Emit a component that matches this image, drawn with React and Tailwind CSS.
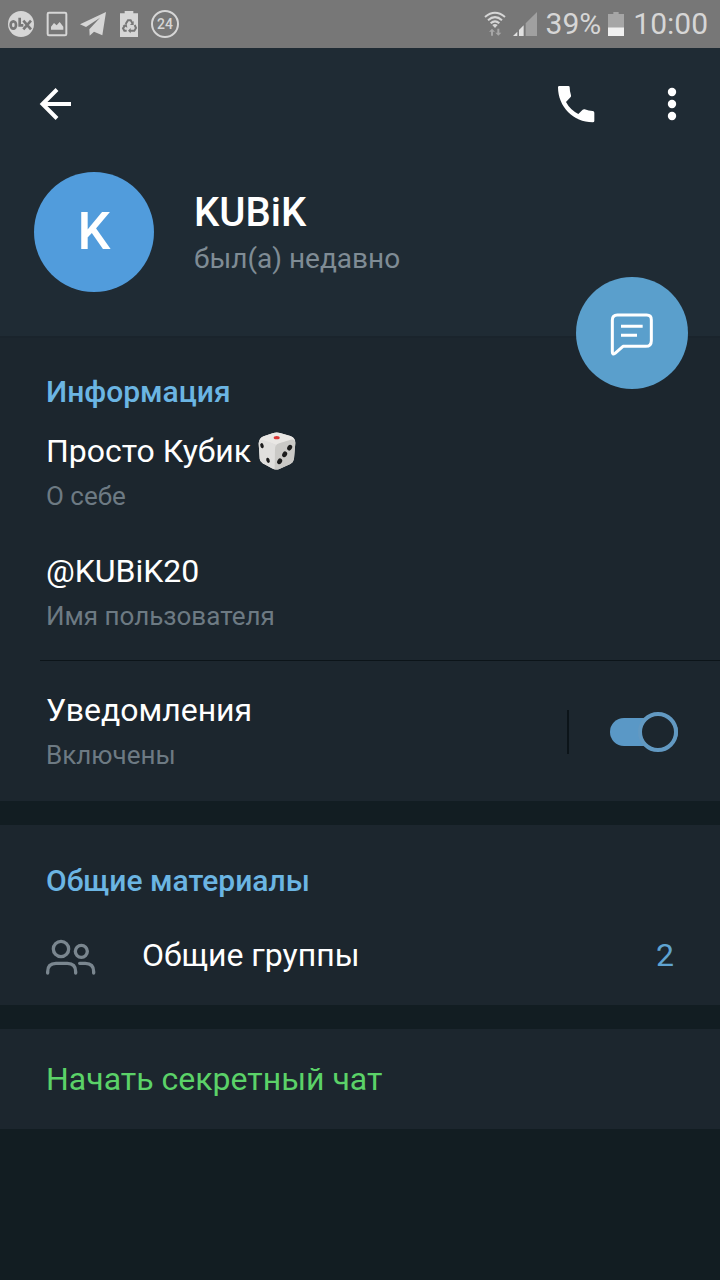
import { useState } from "react";

function StatusBar() {
  return (
    <div className="flex h-12 items-center justify-between bg-[#777777] pl-2 pr-3 text-[#d6d6d6]">
      <div className="flex items-center gap-3">
        <svg className="size-[26px]" viewBox="0 0 78 78" aria-hidden="true">
          <circle cx="39" cy="39" r="39" fill="#d6d6d6" />
          <g fill="none" stroke="#777777" strokeWidth="8">
            <ellipse cx="16" cy="42" rx="8" ry="11" />
            <path d="M35 20v23h11M46 29l23 26M69 29L46 55" />
          </g>
        </svg>
        <svg className="h-[26px] w-[22px]" viewBox="0 0 66 78" aria-hidden="true">
          <rect x="5" y="5" width="56" height="68" rx="4" fill="none" stroke="#d6d6d6" strokeWidth="6" />
          <path d="M15 56V47l9-11 8 7 9-10 11 14v9z" fill="#d6d6d6" />
        </svg>
        <svg className="size-[26px]" viewBox="0 0 78 78" aria-hidden="true">
          <path d="M0 40L78 3 67 73 42 62 29 74 28 55 60 20 18 48z" fill="#d6d6d6" />
        </svg>
        <div className="flex items-center gap-[13px] pl-[2px]">
          <svg className="h-[26px] w-[18px]" viewBox="0 0 54 78" aria-hidden="true">
            <path d="M0 7H14V0H40V7H54V78H0z" fill="#d6d6d6" />
            <g fill="none" stroke="#777777" strokeWidth="6">
              <path d="M17 39l7-11h8l5 8M44 42l4 9-5 8H30M20 59h-7l-4-7 6-9" />
            </g>
            <path d="M41 30v12H30zM32 51v16l-8-8zM8 43l12-4 2 11z" fill="#777777" />
          </svg>
          <span className="flex size-7 items-center justify-center rounded-full border-2 border-[#d6d6d6] text-[14px] font-medium leading-none">
            24
          </span>
        </div>
      </div>
      <div className="flex items-center gap-[7px]">
        <svg className="h-[26px] w-[22px]" viewBox="0 0 66 78" aria-hidden="true">
          <g fill="none" stroke="#d6d6d6" strokeWidth="6">
            <path d="M3 18Q33-7 63 18M12 28Q33 9 54 28M20 37Q33 25 46 37" />
          </g>
          <path d="M25 42q8-6 16 0l-8 9z" fill="#d6d6d6" />
          <path d="M15 62l9-9 9 9h-6v12h-6V62zM34 65h6V53h6v12h6l-9 9z" fill="#a6a6a6" />
        </svg>
        <svg className="size-6" viewBox="0 0 72 72" aria-hidden="true">
          <path d="M0 72l13-13v13zM18 72V54L32 40v32z" fill="#e0e0e0" />
          <path d="M38 72V34L72 0v72z" fill="#a0a0a0" />
        </svg>
        <span className="pl-[2px] text-[30px] leading-9">39%</span>
        <svg className="h-6 w-4" viewBox="0 0 48 72" aria-hidden="true">
          <path d="M0 6h16V0h16v6h16v40H0z" fill="#a6a6a6" />
          <path d="M0 46h48v26H0z" fill="#f0f0f0" />
        </svg>
        <time className="pl-[2px] text-[30px] leading-9">10:00</time>
      </div>
    </div>
  );
}

function Header() {
  return (
    <header className="relative border-b-2 border-[#1a242c] bg-[#1f2b34] pb-11">
      <div className="flex h-28 items-center justify-between pl-8 pr-6">
        <button type="button" aria-label="Назад" className="size-12">
          <svg className="size-12" viewBox="0 0 48 48" fill="none" stroke="#ffffff" strokeWidth="4">
            <path d="M25 9.500L10.500 24 25 38.500M11 24h28" />
          </svg>
        </button>
        <div className="flex gap-12">
          <button type="button" aria-label="Позвонить" className="size-12">
            <svg className="size-12" viewBox="35 30 144 144" fill="#ffffff">
              <path d="M57 48H84Q88 48 88 52Q88 64 92 76Q93 79 91 81L77 96Q89 119 114 132L127 119Q130 117 133 118Q145 123 157 123Q162 123 162 128V153Q162 157 157 157C99 157 53 110 53 52Q53 48 57 48Z" />
            </svg>
          </button>
          <button type="button" aria-label="Ещё" className="size-12">
            <svg className="size-12" viewBox="0 0 48 48" fill="#ffffff">
              <circle cx="24" cy="12" r="4.200" />
              <circle cx="24" cy="24" r="4.200" />
              <circle cx="24" cy="36" r="4.200" />
            </svg>
          </button>
        </div>
      </div>
      <div className="flex gap-10 px-[34px] pt-3">
        <div className="flex size-[120px] shrink-0 items-center justify-center rounded-full bg-[#519cdc] text-[52px] font-medium leading-none text-white">
          K
        </div>
        <div className="pt-[17px]">
          <h1 className="text-[40px] font-medium leading-12 text-white">KUBiK</h1>
          <p className="mt-[2px] text-[28px] leading-10 text-[#7f8c95]">был(а) недавно</p>
        </div>
      </div>
      <button
        type="button"
        aria-label="Написать сообщение"
        className="absolute -bottom-[53px] right-8 flex size-28 items-center justify-center rounded-full bg-[#5a9fcc]"
      >
        <svg className="size-12" viewBox="0 0 144 144" fill="none" stroke="#ffffff" strokeWidth="9">
          <path
            d="M28 18H116Q130 18 130 32V95Q130 112 113 112H45L21 133Q13 139 13 129V33Q13 18 28 18Z"
            strokeLinejoin="round"
          />
          <path d="M39 52H104M39 79H87" />
        </svg>
      </button>
    </header>
  );
}

function Dice() {
  return (
    <svg className="size-[38px]" viewBox="0 0 114 114" role="img" aria-label="Игральная кость">
      <path d="M2 34Q3 18 17 13L46 3Q56 0 66 3L97 12Q112 17 112 32L108 80Q107 90 97 96L64 111Q54 115 44 110L14 94Q6 89 5 80Z" fill="#dcdbd9" />
      <path d="M4 28Q7 16 17 13L46 3Q56 0 66 3L97 12Q107 15 110 24Q90 26 54 38Q26 26 4 28Z" fill="#e9e7e4" />
      <path d="M2 34Q3 22 14 24L40 32Q52 36 52 50L50 112Q46 111 42 109L14 94Q6 89 5 80Z" fill="#e0dfdd" />
      <path d="M51 52Q51 38 64 34L98 23Q112 20 112 34L108 80Q107 90 97 96L64 111Q57 114 50 112Z" fill="#cac9c6" />
      <ellipse cx="56" cy="17" rx="9" ry="5" fill="#d93636" />
      <g fill="#1c1c1c">
        <ellipse cx="12" cy="41" rx="5" ry="8" transform="rotate(-18 12 41)" />
        <ellipse cx="30" cy="85" rx="5" ry="8" transform="rotate(-18 30 85)" />
        <ellipse cx="95" cy="47" rx="7" ry="9" transform="rotate(30 95 47)" />
        <ellipse cx="80" cy="67" rx="7" ry="9" transform="rotate(30 80 67)" />
        <ellipse cx="65" cy="88" rx="7" ry="9" transform="rotate(30 65 88)" />
      </g>
    </svg>
  );
}

function InfoRow({ children, caption }) {
  return (
    <div>
      <div className="flex h-10 items-center gap-[7px] text-[32px] leading-10 text-white">{children}</div>
      <p className="mt-[7px] text-[26px] leading-9 text-[#6d7a83]">{caption}</p>
    </div>
  );
}

function SectionTitle({ children }) {
  return <h2 className="text-[30px] font-medium leading-9 text-[#6bb5e3]">{children}</h2>;
}

function NotificationSwitch() {
  const [on, setOn] = useState(true);
  return (
    <label htmlFor="notifications" className="flex cursor-pointer items-center justify-between pb-7 pl-[46px] pr-[42px] pt-[29px]">
      <InfoRow caption={on ? "Включены" : "Выключены"}>Уведомления</InfoRow>
      <span className="flex items-center gap-[41px]">
        <span className="h-11 w-[2px] bg-[#0c1419]" />
        <input
          id="notifications"
          type="checkbox"
          role="switch"
          checked={on}
          onChange={(e) => setOn(e.target.checked)}
          className="peer sr-only"
        />
        <span className="flex h-7 w-[68px] items-center rounded-full bg-[#5a6770] peer-checked:justify-end peer-checked:bg-[#5a98c6]">
          <span className="size-10 rounded-full border-4 border-[#6299c2] bg-[#1c262e]" />
        </span>
      </span>
    </label>
  );
}

function GroupsIcon() {
  return (
    <svg
      className="h-10 w-[50px]"
      viewBox="0 0 150 120"
      fill="none"
      stroke="#7a868f"
      strokeWidth="10"
      strokeLinecap="round"
      aria-hidden="true"
    >
      <circle cx="45" cy="42" r="23" />
      <circle cx="106" cy="49" r="18" />
      <path d="M5 114V110Q5 85 30 85H64Q89 85 89 110V114" />
      <path d="M101 85H118Q143 85 143 110V114" />
    </svg>
  );
}

export default function App() {
  return (
    <div className="flex min-h-screen flex-col bg-[#121d22] font-[Roboto,sans-serif]">
      <StatusBar />
      <Header />
      <main className="flex flex-col gap-6">
        <section className="bg-[#1c262e] pt-9">
          <div className="px-[46px] pb-[26px]">
            <SectionTitle>Информация</SectionTitle>
            <div className="flex flex-col gap-[37px] pt-[21px]">
              <InfoRow caption="О себе">
                Просто Кубик
                <Dice />
              </InfoRow>
              <InfoRow caption="Имя пользователя">@KUBiK20</InfoRow>
            </div>
          </div>
          <hr className="ml-10 border-t border-[#0c1419]" />
          <NotificationSwitch />
        </section>
        <section className="bg-[#1c262e] pt-[38px]">
          <div className="px-[46px]">
            <SectionTitle>Общие материалы</SectionTitle>
          </div>
          <a href="#groups" className="flex items-center px-[46px] pb-[30px] pt-9 text-[32px] leading-10 text-white">
            <GroupsIcon />
            <span className="flex-1 pl-[46px]">Общие группы</span>
            <span className="text-[#5fa3d1]">2</span>
          </a>
        </section>
        <button type="button" className="bg-[#1c262e] px-[46px] py-[30px] text-left text-[32px] leading-10 text-[#5bd268]">
          Начать секретный чат
        </button>
      </main>
    </div>
  );
}
